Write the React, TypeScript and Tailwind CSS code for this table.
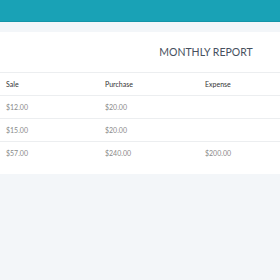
const ROWS = [
  { sale: "$12.00", purchase: "$20.00", expense: "" },
  { sale: "$15.00", purchase: "$20.00", expense: "" },
  { sale: "$57.00", purchase: "$240.00", expense: "$200.00" },
];

export default function App() {
  return (
    <div
      className="h-[280px] w-[280px] overflow-hidden bg-[#f3f6f9]"
      style={{ fontFamily: "Lato, 'Open Sans', sans-serif" }}
    >
      <div className="h-[22px] border-b border-[#1595a8] bg-[#19a2b6]" />
      <div className="pt-[10px]">
        <div className="w-[400px] bg-white pb-[9px]">
          <div className="flex h-[41px] items-center justify-center border-b border-[#eceef0] pl-[12px] pt-[1px] text-[10.5px] text-[#46505e]">
            MONTHLY REPORT
          </div>
          <div className="grid h-[23px] grid-cols-4 items-center border-b border-[#eceef0] text-[7px] text-[#333]">
            <div className="pl-[6px]">Sale</div>
            <div className="pl-[5px]">Purchase</div>
            <div className="pl-[5px]">Expense</div>
            <div className="pl-[5px]" />
          </div>
          {ROWS.map((r, i) => (
            <div
              key={i}
              className={`grid h-[23px] grid-cols-4 items-center text-[7px] text-[#8a8a8a] ${
                i < ROWS.length - 1 ? "border-b border-[#eceef0]" : ""
              }`}
            >
              <div className="pl-[6px]">{r.sale}</div>
              <div className="pl-[5px]">{r.purchase}</div>
              <div className="pl-[5px]">{r.expense}</div>
              <div className="pl-[5px]" />
            </div>
          ))}
        </div>
      </div>
    </div>
  );
}
